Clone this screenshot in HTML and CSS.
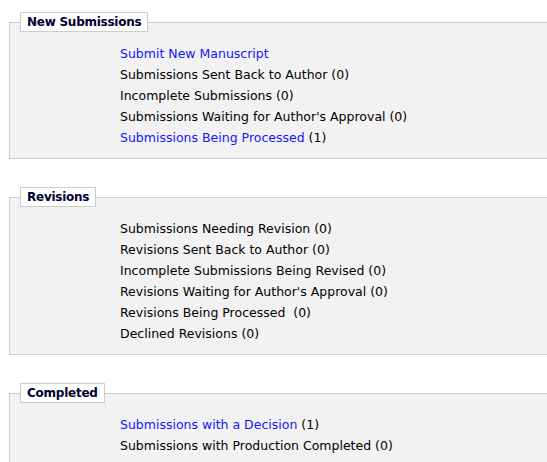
FILE: index.html
```html
<!DOCTYPE html>
<html>
<head>
<meta charset="utf-8">
<link rel="stylesheet" href="styles.css">
</head>
<body>
<fieldset class="panel">
  <legend class="panel-title">New Submissions</legend>
  <ul class="items">
    <li><a href="#">Submit New Manuscript</a></li>
    <li>Submissions Sent Back to Author (0)</li>
    <li>Incomplete Submissions (0)</li>
    <li>Submissions Waiting for Author's Approval (0)</li>
    <li><a href="#">Submissions Being Processed</a> (1)</li>
  </ul>
</fieldset>
<fieldset class="panel">
  <legend class="panel-title">Revisions</legend>
  <ul class="items">
    <li>Submissions Needing Revision (0)</li>
    <li>Revisions Sent Back to Author (0)</li>
    <li>Incomplete Submissions Being Revised (0)</li>
    <li>Revisions Waiting for Author's Approval (0)</li>
    <li>Revisions Being Processed &nbsp;(0)</li>
    <li>Declined Revisions (0)</li>
  </ul>
</fieldset>
<fieldset class="panel">
  <legend class="panel-title">Completed</legend>
  <ul class="items">
    <li><a href="#">Submissions with a Decision</a> (1)</li>
    <li>Submissions with Production Completed (0)</li>
  </ul>
</fieldset>
</body>
</html>
```
FILE: styles.css
```css
html, body {
  margin: 0;
  padding: 0;
  overflow: hidden;
  background: #fff;
}
body {
  padding: 12px 0 0 9px;
  font-family: Tahoma, "DejaVu Sans", Verdana, sans-serif;
  font-size: 12.5px;
  color: #000;
}
.panel {
  margin: 0 -40px 28px 0;
  padding: 0 10px 10px 10px;
  border: 1px solid #cccccc;
  background: #f2f2f2;
  min-width: 0;
}
.panel-title {
  padding: 0 6px;
  border: 1px solid #cccccc;
  background: #fff;
  font-weight: bold;
  font-size: 12px;
  letter-spacing: -0.25px;
  line-height: 18px;
  color: #000033;
}
.items {
  list-style: none;
  margin: 0;
  padding: 11px 0 0 100px;
}
.items li {
  line-height: 21px;
  white-space: nowrap;
}
.items a {
  color: #1414ff;
  text-decoration: none;
}
```
